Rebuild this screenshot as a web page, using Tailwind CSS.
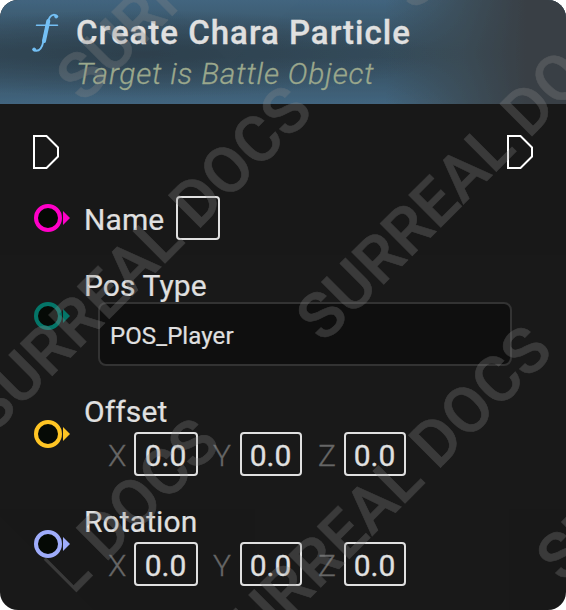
<!DOCTYPE html>
<html lang="en">
<head>
<meta charset="utf-8">
<title>Create Chara Particle</title>
<script src="https://cdn.jsdelivr.net/npm/@tailwindcss/browser@4"></script>
</head>
<body class="bg-white">
<main class="relative w-[566px] h-[610px] overflow-hidden rounded-[18px] bg-[#191919] font-['Roboto',sans-serif] text-[30px] leading-[36px] text-[#e0e0e0]">
  <header class="flex h-[104px] bg-[linear-gradient(90deg,#3c505e00_68%,#3c4a53cc_82%,#3a4046_93%),radial-gradient(ellipse_300px_44px_at_140px_54px,#2c3d49d0,#2c3d4900),linear-gradient(180deg,#42657f_0%,#364e5e_48%,#364e5e_55%,#42657f_100%)]">
    <div class="w-[76px] shrink-0 pl-[31px] pt-[13px]">
      <svg width="29" height="40" viewBox="0 0 29 40" fill="none" stroke="#74c0f5" stroke-linecap="round">
        <path d="M25.500 3C24 1.300 21 1.300 19 4C17 7 16.500 9 15.500 14L12.500 28C11.500 33 9 38 5 37.800C3.500 37.700 2.500 37 2.600 36" stroke-width="1.900"/>
        <path d="M17.300 8L13 28" stroke-width="4"/>
        <path d="M5.500 12.200H26.500" stroke-width="1.500"/>
        <circle cx="25.200" cy="3.500" r="1.500" fill="#74c0f5"/>
        <circle cx="3.200" cy="36.500" r="1.500" fill="#74c0f5"/>
      </svg>
    </div>
    <div class="pt-[13px]">
      <h1 class="text-[33px] leading-[40px] font-medium tracking-[1px] whitespace-nowrap [-webkit-text-stroke:0.3px_#e0e0e0]">Create Chara Particle</h1>
      <p class="text-[30px] leading-[42px] font-light italic tracking-[0.8px] text-[#9ba88d] whitespace-nowrap [-webkit-text-stroke:0.3px_#9ba88d]">Target is Battle Object</p>
    </div>
  </header>

  <section class="flex justify-between pt-[31px] pl-[33px] pr-[33px] h-[92px]">
    <svg width="26" height="34" viewBox="0 0 26 34" fill="none" stroke="#fff" stroke-width="2"><path d="M1 1H13.500L25 12.500V21.500L13.500 33H1Z"/></svg>
    <svg width="26" height="34" viewBox="0 0 26 34" fill="none" stroke="#fff" stroke-width="2"><path d="M1 1H13.500L25 12.500V21.500L13.500 33H1Z"/></svg>
  </section>

  <section class="flex items-center h-[44px] pl-[34px] text-[#ff00c8]">
    <svg width="36" height="28" viewBox="0 0 36 28" class="mr-[14px]"><circle cx="14" cy="14" r="12" fill="#060a06" stroke="currentColor" stroke-width="4"/><path d="M29 7L36 14L29 21Z" fill="currentColor"/></svg>
    <span class="text-[#e0e0e0] mt-[4px] w-[92px] tracking-[0.1px] [-webkit-text-stroke:0.2px_#e0e0e0]">Name</span>
    <span class="size-[44px] rounded-[4px] border-2 border-[#e0e0e0]"></span>
  </section>

  <section class="flex pt-[28px] h-[126px] pl-[34px] text-[#047568]">
    <svg width="36" height="28" viewBox="0 0 36 28" class="mr-[14px] mt-[34px]"><circle cx="14" cy="14" r="12" fill="#060a06" stroke="currentColor" stroke-width="4"/><path d="M29 7L36 14L29 21Z" fill="currentColor"/></svg>
    <div class="text-[#e0e0e0] tracking-[0.1px] [-webkit-text-stroke:0.2px_#e0e0e0]">
      <div class="h-[34px]">Pos Type</div>
      <div class="ml-[14px] w-[414px] h-[64px] rounded-[8px] border-2 border-[#333] bg-[#0f0f0f] pl-[10px] text-[24px] leading-[64px]">POS_Player</div>
    </div>
  </section>

  <section class="flex pt-[28px] h-[110px] pl-[34px] text-[#ffc524]">
    <svg width="36" height="28" viewBox="0 0 36 28" class="mr-[14px] mt-[26px]"><circle cx="14" cy="14" r="12" fill="#060a06" stroke="currentColor" stroke-width="4"/><path d="M29 7L36 14L29 21Z" fill="currentColor"/></svg>
    <div class="text-[#e0e0e0]">
      <div class="h-[38px] tracking-[0.1px] [-webkit-text-stroke:0.2px_#e0e0e0]">Offset</div>
      <div class="flex items-center h-[44px] pl-[24px] [-webkit-text-stroke:0.3px_currentColor]">
        <span class="w-[26px] text-[#666] font-light mt-[4px]">X</span><span class="w-[64px] h-[44px] rounded-[4px] border-2 border-[#e0e0e0] text-center leading-[44px] pr-[1px]">0.0</span>
        <span class="w-[27px] ml-[15px] text-[#666] font-light mt-[4px]">Y</span><span class="w-[62px] h-[44px] rounded-[4px] border-2 border-[#e0e0e0] text-center leading-[44px] pr-[1px]">0.0</span>
        <span class="w-[26px] ml-[16px] text-[#666] font-light mt-[4px]">Z</span><span class="w-[62px] h-[44px] rounded-[4px] border-2 border-[#e0e0e0] text-center leading-[44px] pr-[1px]">0.0</span>
      </div>
    </div>
  </section>

  <section class="flex pt-[28px] h-[110px] pl-[34px] text-[#9fadfb]">
    <svg width="36" height="28" viewBox="0 0 36 28" class="mr-[14px] mt-[26px]"><circle cx="14" cy="14" r="12" fill="#060a06" stroke="currentColor" stroke-width="4"/><path d="M29 7L36 14L29 21Z" fill="currentColor"/></svg>
    <div class="text-[#e0e0e0]">
      <div class="h-[38px] tracking-[0.1px] [-webkit-text-stroke:0.2px_#e0e0e0]">Rotation</div>
      <div class="flex items-center h-[44px] pl-[24px] [-webkit-text-stroke:0.3px_currentColor]">
        <span class="w-[26px] text-[#666] font-light mt-[4px]">X</span><span class="w-[64px] h-[44px] rounded-[4px] border-2 border-[#e0e0e0] text-center leading-[44px] pr-[1px]">0.0</span>
        <span class="w-[27px] ml-[15px] text-[#666] font-light mt-[4px]">Y</span><span class="w-[62px] h-[44px] rounded-[4px] border-2 border-[#e0e0e0] text-center leading-[44px] pr-[1px]">0.0</span>
        <span class="w-[26px] ml-[16px] text-[#666] font-light mt-[4px]">Z</span><span class="w-[62px] h-[44px] rounded-[4px] border-2 border-[#e0e0e0] text-center leading-[44px] pr-[1px]">0.0</span>
      </div>
    </div>
  </section>

  <!-- Repeating diagonal watermark, cut at its tile edges -->
  <svg class="absolute inset-0 pointer-events-none opacity-30 [clip-path:polygon(0_0,167px_0,230px_63px,300px_0,100%_0,100%_100%,94px_100%,0_516px)]" width="566" height="610" viewBox="0 0 566 610" fill="#888" stroke="#888" stroke-width="0.600" font-family="Roboto, sans-serif" font-weight="500" font-size="64">
    <text transform="translate(323.400 344.4) rotate(-45)">SURREAL DOCS</text>
    <text transform="translate(83.400 104.4) rotate(-45)">SURREAL DOCS</text>
    <text transform="translate(563.400 584.4) rotate(-45)">SURREAL DOCS</text>
    <text transform="translate(414.700 12.400) rotate(-45)">SURREAL DOCS</text>
    <text transform="translate(-7.900 436) rotate(-45)">SURREAL DOCS</text>
    <text transform="translate(232.100 676) rotate(-45)">SURREAL DOCS</text>
    <text transform="translate(-100.200 768.600) rotate(-45)">SURREAL DOCS</text>
  </svg>
</main>
</body>
</html>
